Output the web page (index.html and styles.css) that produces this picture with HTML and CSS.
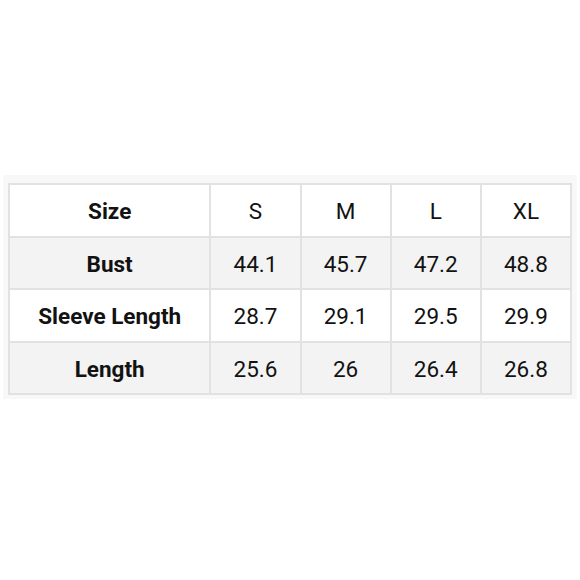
FILE: index.html
```html
<!DOCTYPE html>
<html>
<head>
<meta charset="utf-8">
<link rel="stylesheet" href="styles.css">
</head>
<body>
<div class="frame">
  <table class="size-table">
    <colgroup>
      <col class="c-label">
      <col class="c-val">
      <col class="c-val">
      <col class="c-val">
      <col class="c-val">
    </colgroup>
    <tr class="row-white">
      <th>Size</th><td>S</td><td>M</td><td>L</td><td>XL</td>
    </tr>
    <tr class="row-gray">
      <th>Bust</th><td>44.1</td><td>45.7</td><td>47.2</td><td>48.8</td>
    </tr>
    <tr class="row-white">
      <th>Sleeve Length</th><td>28.7</td><td>29.1</td><td>29.5</td><td>29.9</td>
    </tr>
    <tr class="row-gray">
      <th>Length</th><td>25.6</td><td>26</td><td>26.4</td><td>26.8</td>
    </tr>
  </table>
</div>
</body>
</html>
```
FILE: styles.css
```css
html, body {
  margin: 0;
  padding: 0;
  background: #ffffff;
}
body {
  width: 580px;
  height: 580px;
  font-family: Roboto, "Liberation Sans", sans-serif;
  color: #121212;
}
.frame {
  margin: 175px 3px 0 3px;
  padding: 8px 5px 4px 5px;
  background: #f8f8f8;
  box-sizing: border-box;
  width: 574px;
}
.size-table {
  border-collapse: collapse;
  width: 564px;
  table-layout: fixed;
  border: 2px solid #e2e2e2;
}
.c-label { width: 201px; }
.c-val { width: 90px; }
.size-table th,
.size-table td {
  border: 2px solid #e2e2e2;
  height: 48.5px;
  padding: 2px 0 0 0;
  text-align: center;
  vertical-align: middle;
  font-size: 22.5px;
}
.size-table th {
  font-weight: 700;
}
.size-table td {
  font-weight: 400;
}
.row-white { background: #ffffff; }
.row-gray { background: #f3f3f3; }
```
